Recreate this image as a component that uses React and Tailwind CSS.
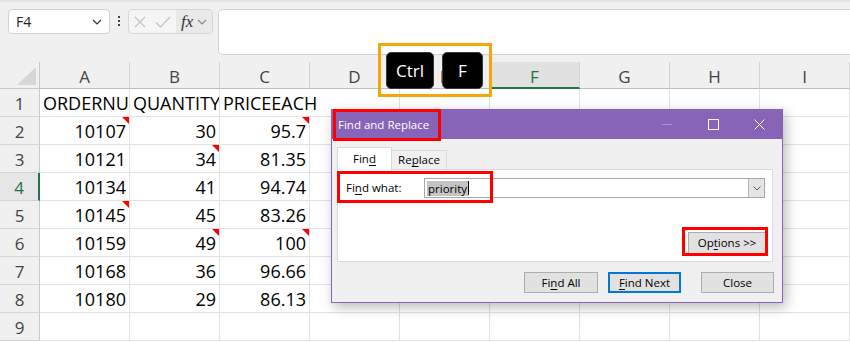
import React from 'react';

const cols = ['A', 'B', 'C', 'D', 'E', 'F', 'G', 'H', 'I'];

const rows = [
  { n: 1, cells: [{ v: 'ORDERNU', left: true }, { v: 'QUANTITY', left: true }, { v: 'PRICEEACH', left: true, spill: true }] },
  { n: 2, cells: [{ v: '10107', note: true }, { v: '30' }, { v: '95.7', note: true }] },
  { n: 3, cells: [{ v: '10121' }, { v: '34', note: true }, { v: '81.35' }] },
  { n: 4, cells: [{ v: '10134' }, { v: '41' }, { v: '94.74' }] },
  { n: 5, cells: [{ v: '10145', note: true }, { v: '45' }, { v: '83.26' }] },
  { n: 6, cells: [{ v: '10159' }, { v: '49', note: true }, { v: '100', note: true }] },
  { n: 7, cells: [{ v: '10168' }, { v: '36' }, { v: '96.66' }] },
  { n: 8, cells: [{ v: '10180' }, { v: '29' }, { v: '86.13' }] },
  { n: 9, cells: [] },
];

const Chevron = ({ className }) => (
  <svg className={className} width="10" height="6" viewBox="0 0 10 6" fill="none">
    <path d="M1 1l4 4 4-4" stroke="currentColor" strokeWidth="1.2" />
  </svg>
);

const FormulaBar = () => (
  <div className="h-[62px] shrink-0 bg-[#f0f0f0] border-t-2 border-[#e2e2e2] flex items-start">
    <div className="ml-[8px] mt-[7px] w-[102px] h-[25px] rounded-[4px] border border-[#d1d1d1] bg-white flex items-center pl-[7px] pr-[7px] text-[14px] text-[#222]">
      <span className="leading-none">F4</span>
      <Chevron className="ml-auto text-[#333]" />
    </div>
    <div className="ml-[8px] mt-[14px] flex flex-col gap-[2px]">
      <span className="w-[2px] h-[2px] bg-[#444]" />
      <span className="w-[2px] h-[2px] bg-[#444]" />
      <span className="w-[2px] h-[2px] bg-[#444]" />
    </div>
    <div className="ml-[8px] mt-[7px] w-[85px] h-[25px] rounded-[4px] border border-[#d6d6d6] bg-[#f5f5f5] flex items-center">
      <svg className="ml-[5px]" width="12" height="12" viewBox="0 0 12 12">
        <path d="M1 1l10 10M11 1L1 11" stroke="#c2c2c2" strokeWidth="1.1" />
      </svg>
      <svg className="ml-[9px]" width="16" height="12" viewBox="0 0 16 12" fill="none">
        <path d="M1 6.5l4.5 4.5L15 1" stroke="#c2c2c2" strokeWidth="1.1" />
      </svg>
      <div className="ml-[5px] h-full flex-1 bg-[#e9e9e9] rounded-r-[3px] flex items-center pl-[5px]">
        <span className="font-['Liberation_Serif',serif] italic text-[17px] text-[#333] leading-none">fx</span>
        <Chevron className="ml-[4px] text-[#888]" />
      </div>
    </div>
    <div className="ml-[5px] mt-[7px] flex-1 h-[46px] rounded-l-[5px] border border-r-0 border-[#d1d1d1] bg-white" />
  </div>
);

const DataCell = ({ cell }) => {
  if (!cell) return <div className="w-[90px] shrink-0 border-r border-b border-[#e1e1e1]" />;
  return (
    <div
      className={
        cell.spill
          ? 'relative w-[90px] shrink-0 border-b border-[#e1e1e1] flex items-end pb-[4px] pl-[3px] whitespace-nowrap'
          : cell.left
          ? 'relative w-[90px] shrink-0 border-r border-b border-[#e1e1e1] flex items-end pb-[4px] pl-[3px] whitespace-nowrap overflow-hidden'
          : 'relative w-[90px] shrink-0 border-r border-b border-[#e1e1e1] flex items-end justify-end pb-[4px] pr-[3px]'
      }
    >
      <span className="leading-none">{cell.v}</span>
      {cell.note && (
        <span className="absolute right-0 top-0 w-0 h-0 border-l-[7px] border-l-transparent border-t-[7px] border-t-[#ff0000]" />
      )}
    </div>
  );
};

const Sheet = () => (
  <div className="flex flex-col">
    <div className="flex h-[27px] bg-[#f0f0f0]">
      <div className="relative w-[40px] shrink-0 border-r border-b border-[#c8c8c8]">
        <span className="absolute right-[3px] bottom-[3px] w-0 h-0 border-l-[19px] border-l-transparent border-b-[18px] border-b-[#d6d6d6]" />
      </div>
      {cols.map(c => (
        <div
          key={c}
          className={
            c === 'F'
              ? 'w-[90px] shrink-0 border-r border-[#d4d4d4] border-b-2 border-b-[#217346] bg-[#e1e1e1] text-[#217346] flex items-end justify-center pb-[2px] text-[17px]'
              : 'w-[90px] shrink-0 border-r border-[#d4d4d4] border-b border-b-[#bdbdbd] text-[#444] flex items-end justify-center pb-[3px] text-[17px]'
          }
        >
          <span className="leading-none">{c}</span>
        </div>
      ))}
    </div>
    {rows.map(r => (
      <div key={r.n} className="flex h-[28px] text-[18px] text-black">
        <div
          className={
            r.n === 4
              ? 'w-[40px] shrink-0 border-b border-[#d4d4d4] border-r-2 border-r-[#217346] bg-[#e6e6e6] text-[#217346] flex items-end justify-center pb-[4px] text-[17px]'
              : 'w-[40px] shrink-0 border-b border-[#d4d4d4] border-r border-r-[#c8c8c8] bg-[#f0f0f0] text-[#444] flex items-end justify-center pb-[4px] text-[17px]'
          }
        >
          <span className="leading-none">{r.n}</span>
        </div>
        {cols.map((c, i) => (
          <DataCell key={c} cell={r.cells[i]} />
        ))}
      </div>
    ))}
  </div>
);

const KeysHint = () => (
  <div className="absolute left-[378px] top-[43px] w-[114px] h-[54px] border-[3px] border-[#f5a60a] flex items-start pt-[6px] pl-[5px] gap-[8px]">
    <div className="w-[48px] h-[37px] rounded-[5px] bg-black border border-[#3a3a3a] flex items-center justify-center text-white text-[17px]">
      Ctrl
    </div>
    <div className="w-[41px] h-[37px] rounded-[5px] bg-black border border-[#3a3a3a] flex items-center justify-center text-white text-[17px]">
      F
    </div>
  </div>
);

const Btn = ({ children, className }) => (
  <div className={`h-[21px] bg-[#e1e1e1] flex items-center justify-center text-[11.5px] text-black ${className}`}>
    {children}
  </div>
);

const FindDialog = () => (
  <div className="absolute left-[331px] top-[109px] w-[452px] h-[194px] border border-[#8764b8] bg-[#f0f0f0] shadow-[3px_4px_12px_rgba(0,0,0,0.28)] flex flex-col text-[11.5px]">
    <div className="h-[29px] shrink-0 bg-[#8764b8] flex items-center text-white">
      <span className="pl-[6px] text-[11.5px]">Find and Replace</span>
      <div className="ml-auto flex h-full">
        <div className="w-[46px] flex items-center justify-center">
          <span className="w-[10px] h-px bg-[#a993d3]" />
        </div>
        <div className="w-[46px] flex items-center justify-center">
          <span className="w-[11px] h-[11px] border border-white" />
        </div>
        <div className="w-[46px] flex items-center justify-center">
          <svg width="11" height="11" viewBox="0 0 11 11">
            <path d="M0.5 0.5l10 10M10.5 0.5l-10 10" stroke="#fff" strokeWidth="1" />
          </svg>
        </div>
      </div>
    </div>
    <div className="flex flex-col pl-[5px] pr-[8px] pt-[8px]">
      <div className="flex items-end relative z-10 -mb-px">
        <div className="w-[55px] h-[23px] bg-white border border-b-0 border-[#d9d9d9] flex items-center justify-center">
          Fin<span className="underline underline-offset-2">d</span>
        </div>
        <div className="w-[55px] h-[20px] bg-[#f0f0f0] border border-l-0 border-[#d9d9d9] flex items-center justify-center">
          Re<span className="underline underline-offset-2">p</span>lace
        </div>
      </div>
      <div className="w-[436px] h-[93px] bg-white border border-[#d9d9d9] flex flex-col">
        <div className="mt-[8px] flex items-center pl-[8px]">
          <div className="w-[78px]">
            Fi<span className="underline underline-offset-2">n</span>d what:
          </div>
          <div className="w-[341px] h-[20px] border border-[#a6a6a6] flex items-center">
            <span className="ml-[2px] bg-[#c4c4c4] leading-[15px] px-px">priority</span>
            <span className="w-px h-[14px] bg-black" />
            <div className="ml-auto w-[16px] h-full bg-[#e5e5e5] border-l border-[#b5b5b5] flex items-center justify-center text-[#555]">
              <svg width="8" height="5" viewBox="0 0 8 5" fill="none">
                <path d="M0.5 0.5l3.5 3.5 3.5-3.5" stroke="currentColor" strokeWidth="1" />
              </svg>
            </div>
          </div>
        </div>
        <Btn className="mt-auto self-end mb-[7px] mr-[6px] w-[78px] h-[22px] border border-[#adadad]">
          Op<span className="underline underline-offset-2">t</span>ions &gt;&gt;
        </Btn>
      </div>
      <div className="mt-[10px] flex justify-end">
        <Btn className="w-[74px] border border-[#adadad]">
          Fi<span className="underline underline-offset-2">n</span>d All
        </Btn>
        <Btn className="ml-[10px] w-[73px] border-2 border-[#0078d7]">
          <span className="underline underline-offset-2">F</span>ind Next
        </Btn>
        <Btn className="ml-[20px] w-[73px] border border-[#adadad]">Close</Btn>
      </div>
    </div>
  </div>
);

const Highlights = () => (
  <>
    <div className="absolute left-[333px] top-[109px] w-[108px] h-[32px] border-[3px] border-[#ff0000]" />
    <div className="absolute left-[337px] top-[171px] w-[156px] h-[32px] border-[3px] border-[#ff0000]" />
    <div className="absolute left-[682px] top-[227px] w-[86px] h-[29px] border-[3px] border-[#ff0000]" />
  </>
);

export default function App() {
  return (
    <div className="relative w-[850px] h-[342px] overflow-hidden bg-white font-['Open_Sans',sans-serif] flex flex-col">
      <FormulaBar />
      <Sheet />
      <KeysHint />
      <FindDialog />
      <Highlights />
    </div>
  );
}
